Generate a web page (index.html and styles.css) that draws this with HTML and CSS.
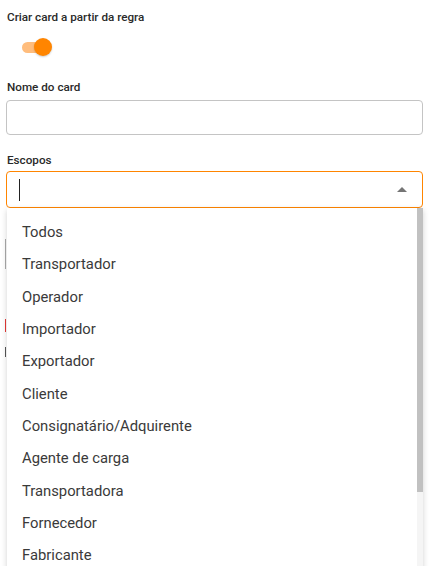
FILE: index.html
```html
<!DOCTYPE html>
<html lang="pt">
<head>
<meta charset="utf-8">
<link rel="stylesheet" href="styles.css">
</head>
<body>
<div class="form">
  <div class="field">
    <label class="label">Criar card a partir da regra</label>
    <div class="toggle"><span class="track"></span><span class="thumb"></span></div>
  </div>
  <div class="field name-field">
    <label class="label">Nome do card</label>
    <div class="input"></div>
  </div>
  <div class="field select-field">
    <label class="label">Escopos</label>
    <div class="input focused">
      <span class="caret"></span>
      <svg class="arrow" width="10" height="5" viewBox="0 0 10 5"><path d="M0 5 L5 0 L10 5 Z" fill="#757575"/></svg>
    </div>
    <div class="menu">
      <ul class="options">
        <li>Todos</li>
        <li>Transportador</li>
        <li>Operador</li>
        <li>Importador</li>
        <li>Exportador</li>
        <li>Cliente</li>
        <li>Consignatário/Adquirente</li>
        <li>Agente de carga</li>
        <li>Transportadora</li>
        <li>Fornecedor</li>
        <li>Fabricante</li>
      </ul>
      <div class="scrollbar"><div class="thumb-bar"></div></div>
    </div>
  </div>
  <div class="hidden-content">
    <div class="ghost gray"></div>
    <div class="ghost red"></div>
    <div class="ghost dark"></div>
  </div>
</div>
</body>
</html>
```

FILE: styles.css
```css
html, body { margin: 0; padding: 0; background: #fff; }
body { font-family: Roboto, "Open Sans", sans-serif; color: #222; overflow: hidden; height: 566px; }
.form { padding: 10px 11px 0 6px; height: 556px; overflow: hidden; }
.field { display: flex; flex-direction: column; }
.label { font-size: 11.7px; font-weight: 500; color: #2a2a2a; padding-left: 1px; line-height: 14px; }
.toggle { position: relative; width: 36px; height: 20px; margin: 13px 0 0 12px; }
.track { position: absolute; left: 4px; top: 5px; width: 28px; height: 11px; border-radius: 6px; background: #ffbd7d; }
.thumb { position: absolute; left: 16px; top: 1px; width: 18px; height: 18px; border-radius: 50%; background: #ff8500; box-shadow: 0 1px 2px rgba(0,0,0,0.2); }
.name-field { margin-top: 23px; }
.select-field { margin-top: 18px; position: relative; }
.input { margin-top: 6px; height: 33px; border: 1px solid #c4c4c4; border-radius: 4px; position: relative; }
.focused { border-color: #ff8500; height: 35px; margin-top: 4px; }
.caret { position: absolute; left: 12px; top: 7px; width: 1px; height: 22px; background: #222; }
.arrow { position: absolute; right: 15px; top: 15px; }
.menu { position: absolute; left: 1px; right: 0; top: 55px; height: 400px; background: #fff; box-shadow: 0 2px 6px rgba(0,0,0,0.18); z-index: 2; }
.options { list-style: none; margin: 0; padding: 8px 0 0; }
.options li { height: 32.35px; line-height: 32.35px; padding-left: 15px; font-size: 14.8px; color: #3a3a3a; }
.scrollbar { position: absolute; right: 0; top: 0; bottom: 0; width: 6px; background: #f5f5f5; }
.thumb-bar { height: 284px; background: #c1c1c1; }
.hidden-content { margin-top: 31px; display: flex; flex-direction: column; }
.ghost { width: 1px; margin-left: -1px; }
.gray { height: 30px; background: #aaa; }
.red { height: 13px; margin-top: 50px; background: #e53935; }
.dark { height: 10px; margin-top: 15px; background: #555; }
```
